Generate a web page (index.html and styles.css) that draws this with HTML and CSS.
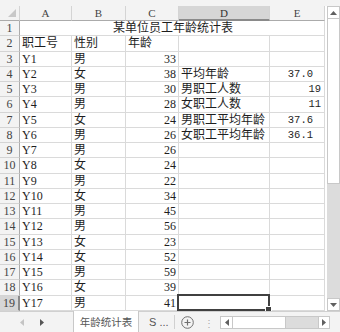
FILE: index.html
```html
<!DOCTYPE html>
<html lang="zh">
<head>
<meta charset="utf-8">
<link rel="stylesheet" href="styles.css">
</head>
<body>
<div class="app">
  <div class="main">
    <div class="sheet">
      <div class="ch corner"><span class="tri"></span></div>
      <div class="ch">A</div><div class="ch">B</div><div class="ch">C</div><div class="ch sel">D</div><div class="ch">E</div>

      <div class="rh">1</div><div class="c title">某单位员工年龄统计表</div>
      <div class="rh">2</div><div class="c">职工号</div><div class="c">性别</div><div class="c">年龄</div><div class="c"></div><div class="c"></div>
      <div class="rh">3</div><div class="c">Y1</div><div class="c">男</div><div class="c n">33</div><div class="c"></div><div class="c"></div>
      <div class="rh">4</div><div class="c">Y2</div><div class="c">女</div><div class="c n">38</div><div class="c">平均年龄</div><div class="c m d">37.0</div>
      <div class="rh">5</div><div class="c">Y3</div><div class="c">男</div><div class="c n">30</div><div class="c">男职工人数</div><div class="c m">19</div>
      <div class="rh">6</div><div class="c">Y4</div><div class="c">男</div><div class="c n">28</div><div class="c">女职工人数</div><div class="c m">11</div>
      <div class="rh">7</div><div class="c">Y5</div><div class="c">女</div><div class="c n">24</div><div class="c">男职工平均年龄</div><div class="c m d">37.6</div>
      <div class="rh">8</div><div class="c">Y6</div><div class="c">男</div><div class="c n">26</div><div class="c">女职工平均年龄</div><div class="c m d">36.1</div>
      <div class="rh">9</div><div class="c">Y7</div><div class="c">男</div><div class="c n">26</div><div class="c"></div><div class="c"></div>
      <div class="rh">10</div><div class="c">Y8</div><div class="c">女</div><div class="c n">24</div><div class="c"></div><div class="c"></div>
      <div class="rh">11</div><div class="c">Y9</div><div class="c">男</div><div class="c n">22</div><div class="c"></div><div class="c"></div>
      <div class="rh">12</div><div class="c">Y10</div><div class="c">女</div><div class="c n">34</div><div class="c"></div><div class="c"></div>
      <div class="rh">13</div><div class="c">Y11</div><div class="c">男</div><div class="c n">45</div><div class="c"></div><div class="c"></div>
      <div class="rh">14</div><div class="c">Y12</div><div class="c">男</div><div class="c n">56</div><div class="c"></div><div class="c"></div>
      <div class="rh">15</div><div class="c">Y13</div><div class="c">女</div><div class="c n">23</div><div class="c"></div><div class="c"></div>
      <div class="rh">16</div><div class="c">Y14</div><div class="c">女</div><div class="c n">52</div><div class="c"></div><div class="c"></div>
      <div class="rh">17</div><div class="c">Y15</div><div class="c">男</div><div class="c n">59</div><div class="c"></div><div class="c"></div>
      <div class="rh">18</div><div class="c">Y16</div><div class="c">女</div><div class="c n">39</div><div class="c"></div><div class="c"></div>
      <div class="rh sel">19</div><div class="c">Y17</div><div class="c">男</div><div class="c n">41</div><div class="c active"><span class="selbox"><span class="handle"></span></span></div><div class="c"></div>
    </div>
    <div class="vscroll">
      <div class="vbtn"><svg width="7" height="4" viewBox="0 0 7 4"><path d="M0 4 L3.5 0 L7 4 Z" fill="#606060"/></svg></div>
      <div class="vthumb"></div>
      <div class="vtrack"></div>
      <div class="vbtn"><svg width="7" height="4" viewBox="0 0 7 4"><path d="M0 0 L3.5 4 L7 0 Z" fill="#606060"/></svg></div>
    </div>
  </div>
  <div class="tabbar">
    <div class="nav">
      <svg width="4" height="7" viewBox="0 0 4 7"><path d="M4 0 L0 3.5 L4 7 Z" fill="#c4c4c4"/></svg>
      <svg width="4" height="7" viewBox="0 0 4 7"><path d="M0 0 L4 3.5 L0 7 Z" fill="#555"/></svg>
    </div>
    <div class="tab">年龄统计表</div>
    <div class="more">S ...</div>
    <div class="add"><svg width="13" height="13" viewBox="0 0 13 13"><circle cx="6.5" cy="6.5" r="5.8" fill="none" stroke="#707070" stroke-width="1"/><path d="M6.5 3.5 V9.5 M3.5 6.5 H9.5" stroke="#707070" stroke-width="1.2"/></svg></div>
    <div class="dots">⋮</div>
    <div class="hscroll">
      <div class="hbtn"><svg width="4" height="7" viewBox="0 0 4 7"><path d="M4 0 L0 3.5 L4 7 Z" fill="#606060"/></svg></div>
      <div class="hthumb"></div>
      <div class="htrack"></div>
      <div class="hbtn last"><svg width="4" height="7" viewBox="0 0 4 7"><path d="M0 0 L4 3.5 L0 7 Z" fill="#606060"/></svg></div>
    </div>
  </div>
</div>
</body>
</html>
```
FILE: styles.css
```css
* { box-sizing: border-box; }
html, body { margin: 0; padding: 0; }
body {
  width: 340px;
  height: 332px;
  overflow: hidden;
  background: #ffffff;
  font-family: "Liberation Serif", "Noto Sans CJK SC", serif;
}
.app { display: flex; flex-direction: column; width: 340px; height: 332px; }
.main { display: flex; height: 311px; background: #f3f3f3; padding-top: 6px; }
.sheet {
  width: 325px;
  height: 305px;
  display: grid;
  grid-template-columns: 20px 52px 54px 53px 91px 55px;
  grid-template-rows: 15px repeat(19, 15.26px);
  background: #ffffff;
  align-content: start;
  overflow: hidden;
}
.ch {
  background: #f3f3f3;
  border-right: 1px solid #d4d4d4;
  border-bottom: 1px solid #ababab;
  color: #444;
  font-size: 11px;
  text-align: center;
  line-height: 14px;
}
.ch.sel { background: #d6d6d6; border-bottom: 2px solid #8a8a8a; color: #333; }
.corner { position: relative; }
.corner .tri {
  position: absolute; right: 3px; bottom: 3px;
  width: 0; height: 0;
  border-left: 8px solid transparent;
  border-bottom: 8px solid #c8c8c8;
}
.rh {
  background: #f3f3f3;
  border-right: 1px solid #ababab;
  border-bottom: 1px solid #d4d4d4;
  color: #444;
  font-size: 12px;
  text-align: center;
  line-height: 15px;
}
.rh.sel { background: #d6d6d6; border-right: 2px solid #8a8a8a; }
.c {
  border-right: 1px solid #dadada;
  border-bottom: 1px solid #dadada;
  font-size: 12px;
  line-height: 14px;
  padding-left: 2px;
  color: #1e1e1e;
  white-space: nowrap;
  position: relative;
  min-width: 0;
}
.title { grid-column: 2 / span 5; text-align: center; }
.n { text-align: right; padding-right: 2px; }
.m { text-align: right; padding-right: 3px; font-family: "Liberation Mono", monospace; font-size: 10.5px; }
.m.d { padding-right: 11px; }
.selbox {
  position: absolute;
  left: -2px; top: -2px; right: -1px; bottom: -1px;
  border: 2px solid #404040;
  z-index: 2;
}
.handle {
  position: absolute;
  right: -4px; bottom: -4px;
  width: 5px; height: 5px;
  background: #404040;
  border: 1px solid #ffffff;
  box-sizing: content-box;
}
.vscroll {
  width: 15px;
  display: flex;
  flex-direction: column;
  background: #dcdcdc;
  border-left: 2px solid #ffffff;
}
.vbtn {
  height: 13px;
  background: #ffffff;
  border: 1px solid #c8c8c8;
  display: flex; align-items: center; justify-content: center;
}
.vthumb { height: 165px; background: #ffffff; border: 1px solid #c8c8c8; border-top: none; }
.vtrack { flex: 1; }
.tabbar {
  height: 21px;
  display: flex;
  align-items: stretch;
  background: #f3f3f3;
  border-top: 1px solid #d0d0d0;
  font-family: "Noto Sans CJK SC", sans-serif;
  font-size: 11px;
  color: #444;
}
.nav { width: 73px; display: flex; align-items: center; gap: 16px; padding-left: 20px; }
.tab {
  width: 66px;
  background: #ffffff;
  margin-top: -1px;
  border-left: 1px solid #c8c8c8;
  border-right: 1px solid #c8c8c8;
  display: flex; align-items: center; justify-content: center;
  color: #555;
  font-size: 10.5px;
}
.more { width: 36px; display: flex; align-items: center; padding-left: 10px; border-right: 1px solid #d0d0d0; margin: 3px 0; font-family: "Liberation Sans", sans-serif; color: #555; }
.add { width: 22px; display: flex; align-items: center; justify-content: center; margin-left: 1px; }
.dots { width: 22px; display: flex; align-items: center; justify-content: center; color: #aaa; font-size: 10px; }
.hscroll {
  width: 110px;
  height: 13px;
  align-self: center;
  display: flex;
  background: #dcdcdc;
  border: 1px solid #c8c8c8;
}
.hbtn { width: 11px; background: #ffffff; display: flex; align-items: center; justify-content: center; }
.hbtn.last { border-left: 1px solid #c8c8c8; }
.hthumb { width: 54px; background: #ffffff; border-left: 1px solid #c8c8c8; border-right: 1px solid #c8c8c8; }
.htrack { flex: 1; }
```
